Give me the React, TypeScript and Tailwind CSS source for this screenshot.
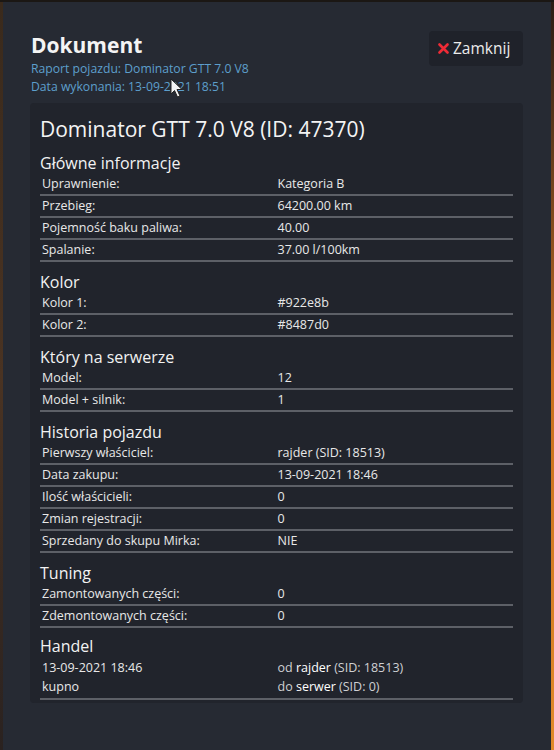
import React from "react";

type Row = { label: string; value: React.ReactNode };
type Section = { title: string; rows: Row[] };

const sections: Section[] = [
  {
    title: "Główne informacje",
    rows: [
      { label: "Uprawnienie:", value: "Kategoria B" },
      { label: "Przebieg:", value: "64200.00 km" },
      { label: "Pojemność baku paliwa:", value: "40.00" },
      { label: "Spalanie:", value: "37.00 l/100km" },
    ],
  },
  {
    title: "Kolor",
    rows: [
      { label: "Kolor 1:", value: "#922e8b" },
      { label: "Kolor 2:", value: "#8487d0" },
    ],
  },
  {
    title: "Który na serwerze",
    rows: [
      { label: "Model:", value: "12" },
      { label: "Model + silnik:", value: "1" },
    ],
  },
  {
    title: "Historia pojazdu",
    rows: [
      { label: "Pierwszy właściciel:", value: "rajder (SID: 18513)" },
      { label: "Data zakupu:", value: "13-09-2021 18:46" },
      { label: "Ilość właścicieli:", value: "0" },
      { label: "Zmian rejestracji:", value: "0" },
      { label: "Sprzedany do skupu Mirka:", value: "NIE" },
    ],
  },
  {
    title: "Tuning",
    rows: [
      { label: "Zamontowanych części:", value: "0" },
      { label: "Zdemontowanych części:", value: "0" },
    ],
  },
];

function SectionTitle({ children }: { children: React.ReactNode }) {
  return (
    <h3 className="mt-[10px] text-[16px] leading-[21px] text-[#f2f2f2]">
      {children}
    </h3>
  );
}

function InfoRow({ label, value }: Row) {
  return (
    <div className="grid h-[22px] grid-cols-2 items-center border-b-2 border-[#5d6067] text-[12.5px] text-[#e8e8e8]">
      <span className="pl-[2px]">{label}</span>
      <span className="pl-[1px]">{value}</span>
    </div>
  );
}

function Cursor() {
  return (
    <svg
      className="absolute left-[167px] top-[76px]"
      width="14"
      height="20"
      viewBox="0 0 14 20"
    >
      <path
        d="M1 1 L1 16 L4.5 12.5 L7.5 19 L10 18 L7 11.5 L12 11.5 Z"
        fill="#f4f4f4"
        stroke="#222"
        strokeWidth="1"
        strokeLinejoin="round"
      />
    </svg>
  );
}

export default function App() {
  return (
    <div
      className="flex h-[750px] w-[554px] overflow-hidden bg-[#1b1714] pt-[2px]"
      style={{ fontFamily: '"Open Sans", "Noto Sans", sans-serif' }}
    >
      <div className="w-[3px] bg-gradient-to-b from-[#3a2a1c] via-[#4a3322] to-[#2a2220]" />
      <div className="relative flex w-[548px] flex-col bg-[#262a33] pl-[27px] pr-[28px] pt-[29px]">
        <Cursor />
        <div className="flex items-start justify-between">
          <div>
            <h1 className="pl-[1px] text-[21px] font-bold leading-[29px] text-[#f4f4f4]">
              Dokument
            </h1>
            <p className="pl-[1px] text-[12.2px] leading-[18px] text-[#5d9fcc]">
              Raport pojazdu: Dominator GTT 7.0 V8
            </p>
            <p className="pl-[1px] text-[12.2px] leading-[18px] text-[#5d9fcc]">
              Data wykonania: 13-09-2021 18:51
            </p>
          </div>
          <button className="flex h-[35px] w-[94px] items-center gap-[4px] rounded-[4px] bg-[#1f222a] pl-[9px] text-[15.5px] text-[#ececec]">
            <svg width="11" height="11" viewBox="0 0 11 11">
              <path
                d="M1.5 1.5 L9.5 9.5 M9.5 1.5 L1.5 9.5"
                stroke="#ee2b36"
                strokeWidth="2.6"
                strokeLinecap="round"
              />
            </svg>
            Zamknij
          </button>
        </div>

        <div className="mt-[7px] rounded-[4px] bg-[#21242c] px-[10px] pb-[3px] pt-[13px]">
          <h2 className="text-[21px] leading-[27px] text-[#f4f4f4]">
            Dominator GTT 7.0 V8 (ID: 47370)
          </h2>
          {sections.map((s) => (
            <div key={s.title}>
              <SectionTitle>{s.title}</SectionTitle>
              {s.rows.map((r) => (
                <InfoRow key={r.label} label={r.label} value={r.value} />
              ))}
            </div>
          ))}
          <h3 className="mt-[8px] text-[16px] leading-[21px] text-[#f2f2f2]">
            Handel
          </h3>
          <div className="grid grid-cols-2 border-b-2 border-[#5d6067] pb-[2px] pt-[1px] text-[12.5px] leading-[19px] text-[#e8e8e8]">
            <div className="pl-[2px]">
              <div>13-09-2021 18:46</div>
              <div>kupno</div>
            </div>
            <div className="pl-[1px] text-[#cfd0d3]">
              <div>
                od <span className="text-white">rajder</span> (SID: 18513)
              </div>
              <div>
                do <span className="text-white">serwer</span> (SID: 0)
              </div>
            </div>
          </div>
        </div>
      </div>
      <div className="w-[3px] bg-gradient-to-b from-[#2a1d14] via-[#c8701e] to-[#e08a2a]" />
    </div>
  );
}
